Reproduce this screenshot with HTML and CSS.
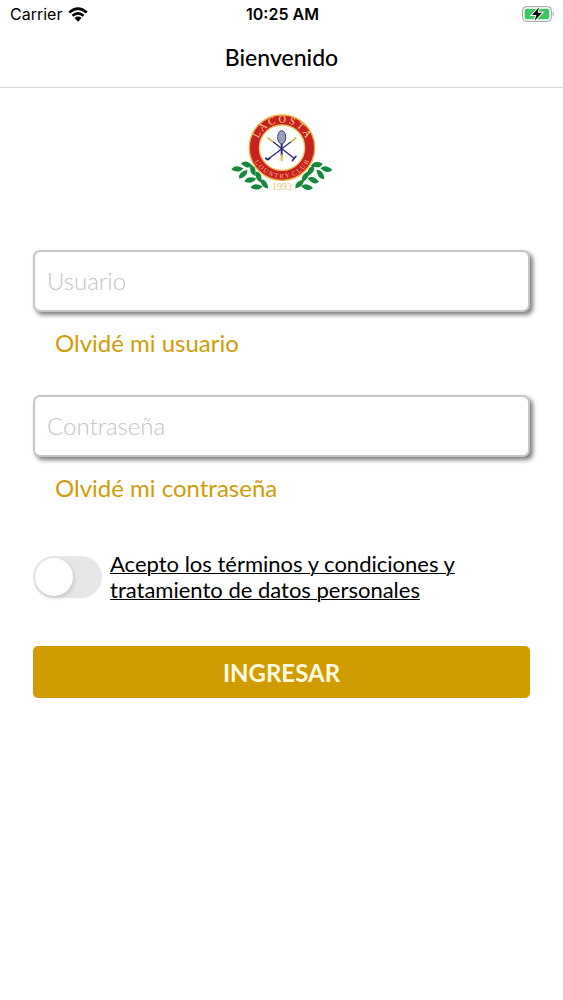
FILE: index.html
```html
<!DOCTYPE html>
<html lang="es">
<head>
    <meta charset="UTF-8">
    <meta name="viewport" content="width=device-width, initial-scale=1.0">
    <title>Bienvenido</title>
    <link rel="stylesheet" href="styles.css">
</head>
<body>
    <div class="status-bar">
        <div class="status-left">
            <span>Carrier</span>
            <svg class="wifi-icon" viewBox="0 0 60 46" aria-hidden="true">
                <g fill="none" stroke="#000" stroke-width="8">
                    <path d="M3 17Q30-7 57 17"/>
                    <path d="M13 27Q30 12 47 27"/>
                </g>
                <path d="M19 34Q30 25 41 34L30 45Z"/>
            </svg>
        </div>
        <div class="status-time">10:25 AM</div>
        <div class="status-right">
            <svg class="battery-icon" viewBox="0 0 99 48" aria-hidden="true">
                <rect x="2" y="2" width="86" height="44" rx="11" fill="#fff" stroke="#999" stroke-width="3"/>
                <rect x="8" y="8" width="74" height="32" rx="6" fill="#3cc765"/>
                <path d="M92 16Q99 24 92 32Z" fill="#999"/>
                <path d="M51 4L30 27H43L38 44L60 20H47Z" fill="#000" stroke="#fff" stroke-width="6" paint-order="stroke"/>
            </svg>
        </div>
    </div>

    <header class="header">
        <h1 class="title">Bienvenido</h1>
    </header>

    <main class="content">
        <svg class="logo" viewBox="7 0 330 285" role="img" aria-label="Lacosta Country Club 1993">
            <defs>
                <path id="topArc" d="M116 180A76 76 0 1 1 228 180"/>
                <path id="bottomArc" d="M88 90A92 92 0 1 0 256 90"/>
                <path id="leaf" d="M-18 0Q-8-17 18 0Q4 16-18 0Z"/>
            </defs>
            <circle cx="172" cy="128" r="98" fill="#c8201f" stroke="#e5b13a" stroke-width="4"/>
            <circle cx="172" cy="128" r="68" fill="#fff" stroke="#e9c462" stroke-width="4"/>
            <!-- clubs and racket -->
            <g fill="none" stroke-linecap="round">
                <path d="M130 99L147 112M213 99L197 112" stroke="#e2b540" stroke-width="5"/>
                <path d="M147 112L208 160M197 112L134 160" stroke="#2b2c7c" stroke-width="4"/>
                <path d="M134 160Q130 167 124 160" stroke="#2b2c7c" stroke-width="6"/>
                <path d="M203 167L214 154" stroke="#2b2c7c" stroke-width="5"/>
                <path d="M171 118V151" stroke="#2b2c7c" stroke-width="6"/>
                <path d="M171 151V166" stroke="#e2b540" stroke-width="6"/>
            </g>
            <ellipse cx="171" cy="97" rx="12" ry="20" fill="#a7abca" stroke="#34377f" stroke-width="3"/>
            <path d="M162 90H180M161 98H181M163 106H179M167 80V114M175 80V114" stroke="#747aa8" stroke-width="1"/>
            <!-- laurel -->
            <g fill="#16883b">
                <use href="#leaf" transform="translate(67 179) rotate(12)"/>
                <use href="#leaf" transform="translate(38 192) rotate(-8)"/>
                <use href="#leaf" transform="translate(85 197) rotate(65)"/>
                <use href="#leaf" transform="translate(56 208) rotate(-48)"/>
                <use href="#leaf" transform="translate(102 216) rotate(65)"/>
                <use href="#leaf" transform="translate(77 225) rotate(-18)"/>
                <use href="#leaf" transform="translate(119 237) rotate(48)"/>
                <use href="#leaf" transform="translate(96 246) rotate(-8)"/>
                <use href="#leaf" transform="translate(276 179) rotate(168)"/>
                <use href="#leaf" transform="translate(305 192) rotate(188)"/>
                <use href="#leaf" transform="translate(258 197) rotate(115)"/>
                <use href="#leaf" transform="translate(287 208) rotate(228)"/>
                <use href="#leaf" transform="translate(241 216) rotate(115)"/>
                <use href="#leaf" transform="translate(266 225) rotate(198)"/>
                <use href="#leaf" transform="translate(224 237) rotate(132)"/>
                <use href="#leaf" transform="translate(247 246) rotate(188)"/>
            </g>
            <g class="logo-text" text-anchor="middle">
                <text font-size="31" fill="#f6d993"><textPath href="#topArc" startOffset="50%">L A C O S T A</textPath></text>
                <text font-size="20" fill="#f2bd85"><textPath href="#bottomArc" startOffset="50%">C O U N T R Y &#160;C L U B</textPath></text>
                <text x="172" y="256" font-size="30" fill="#e8c56e">1993</text>
            </g>
        </svg>

        <form class="login-form">
            <div class="field">
                <input class="text-input" type="text" placeholder="Usuario" aria-label="Usuario">
                <a class="forgot-link" href="#">Olvidé mi usuario</a>
            </div>
            <div class="field">
                <input class="text-input" type="password" placeholder="Contraseña" aria-label="Contraseña">
                <a class="forgot-link" href="#">Olvidé mi contraseña</a>
            </div>
            <div class="terms">
                <input class="switch" type="checkbox" id="terms" aria-labelledby="termsText">
                <a class="terms-link" id="termsText" href="#">Acepto los términos y condiciones y tratamiento de datos personales</a>
            </div>
            <button class="submit-button" type="submit">INGRESAR</button>
        </form>
    </main>
</body>
</html>
```
FILE: styles.css
```css
* {
    box-sizing: border-box;
}
body {
    margin: 0;
    background-color: #fff;
    color: #000;
    font-family: Lato, sans-serif;
}
.status-bar {
    display: grid;
    grid-template-columns: 1fr auto 1fr;
    align-items: center;
    height: 28px;
    padding: 0 8px 0 10px;
    font-family: Inter, sans-serif;
    font-size: 16px;
}
.status-left {
    display: flex;
    align-items: center;
    gap: 6px;
}
.wifi-icon {
    width: 20px;
    height: 15px;
}
.status-time {
    font-weight: 600;
}
.status-right {
    display: flex;
    justify-content: flex-end;
}
.battery-icon {
    width: 33px;
    height: 16px;
}
.header {
    height: 60px;
    padding-bottom: 2px;
    border-bottom: 1px solid #d6d6d6;
    display: flex;
    align-items: center;
    justify-content: center;
}
.title {
    margin: 0;
    font-size: 23px;
    font-weight: 500;
}
.content {
    padding: 17px 33px;
}
.logo {
    display: block;
    width: 110px;
    height: 95px;
    margin: 0 auto 50px;
}
.logo-text {
    font-family: "Liberation Serif", serif;
}
.field {
    margin-bottom: 36px;
}
.text-input {
    display: block;
    width: 100%;
    height: 62px;
    padding: 0 12px 2px;
    border: 2px solid #c6c5c8;
    border-radius: 7px;
    background-color: #fff;
    box-shadow: 3px 3px 4px rgba(0, 0, 0, 0.5);
    font-family: inherit;
    font-size: 24px;
    font-weight: 300;
    outline: none;
}
.text-input::placeholder {
    color: #c4c4c8;
    opacity: 1;
}
.forgot-link {
    display: block;
    margin: 15px 22px 0;
    color: #d19c08;
    font-size: 24px;
    line-height: 32px;
    text-decoration: none;
}
.terms {
    display: flex;
    align-items: center;
    gap: 8px;
    margin-bottom: 43px;
    padding-top: 11px;
}
.switch {
    appearance: none;
    flex: none;
    width: 69px;
    height: 42px;
    margin: 0;
    padding: 2px;
    border-radius: 21px;
    background-color: #e7e6e9;
    cursor: pointer;
}
.switch::before {
    content: "";
    display: block;
    width: 38px;
    height: 38px;
    border-radius: 50%;
    background-color: #fff;
    box-shadow: 1px 2px 4px rgba(0, 0, 0, 0.15);
}
.switch:checked {
    background-color: #d19c00;
}
.switch:checked::before {
    margin-left: auto;
}
.terms-link {
    color: #000;
    font-size: 22px;
    line-height: 26px;
    text-decoration-thickness: 1px;
}
.submit-button {
    display: block;
    width: 100%;
    height: 52px;
    border: none;
    border-radius: 5px;
    background-color: #d19c00;
    color: #fffbe0;
    font-family: inherit;
    font-size: 24px;
    font-weight: 700;
    cursor: pointer;
}
```
